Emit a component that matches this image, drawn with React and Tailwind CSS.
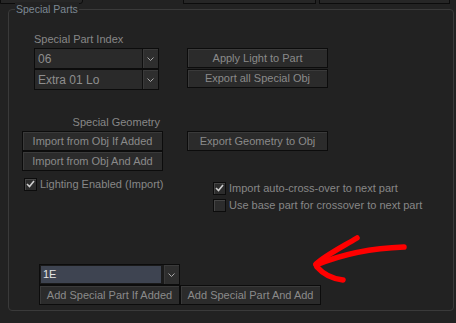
import React from 'react';

const font = { fontFamily: '"Liberation Sans", Arial, sans-serif' };

function Btn({ children, className = '' }) {
  return (
    <div
      className={`flex items-center justify-center border border-[#0c0c0c] bg-[#2b2b2b] text-[11px] text-[#8a8a8a] shadow-[inset_1px_1px_0_#3a3a3a] whitespace-nowrap ${className}`}
    >
      {children}
    </div>
  );
}

function Chevron() {
  return (
    <svg width="7" height="4" viewBox="0 0 7 4" className="block">
      <path d="M0.5 0.5 L3.5 3.5 L6.5 0.5" fill="none" stroke="#a8a8a8" strokeWidth="1" />
    </svg>
  );
}

function Select({ value, className = '' }) {
  return (
    <div className={`flex h-[21px] border border-[#0c0c0c] bg-[#0f0f0f] ${className}`}>
      <div className="flex flex-1 items-center bg-[#2a2a2a] pl-[3px] text-[12px] text-[#8e8e8e]">{value}</div>
      <div className="ml-[1px] flex w-[15px] items-center justify-center bg-[#2e2e2e] shadow-[inset_1px_1px_0_#3a3a3a]">
        <Chevron />
      </div>
    </div>
  );
}

function Check({ checked, label }) {
  return (
    <div className="flex items-center gap-[3px] text-[11px] text-[#878787]">
      <div className="flex h-[13px] w-[13px] items-center justify-center border border-[#0c0c0c] bg-[#2c2c2c] shadow-[inset_1px_1px_0_#454545]">
        {checked && (
          <svg width="9" height="8" viewBox="0 0 9 8">
            <path d="M1 4 L3.5 6.5 L8 1" fill="none" stroke="#cfcfcf" strokeWidth="1.6" />
          </svg>
        )}
      </div>
      <span className="leading-[14px]">{label}</span>
    </div>
  );
}

export default function App() {
  return (
    <div className="relative h-[323px] w-[456px] overflow-hidden bg-[#222222]" style={font}>
      {/* clipped tab buttons at the top */}
      <div className="flex h-[4px]">
        <div className="-mt-[17px] h-[21px] w-[83px] rounded-br-[3px] border border-[#0c0c0c] bg-[#262626]" />
        <div className="-mt-[17px] ml-[100px] h-[21px] w-[133px] border border-[#0c0c0c] bg-[#262626]" />
        <div className="-mt-[17px] ml-[3px] h-[21px] w-[131px] border border-[#0c0c0c] bg-[#262626]" />
      </div>

      {/* group box */}
      <div className="relative ml-[8px] mt-[5px] h-[302px] w-[446px] rounded-[4px] border border-[#3a3a3a]">
        <div className="absolute -top-[8px] left-[6px] bg-[#222222] px-[1px] text-[10.5px] leading-[14px] text-[#7d8893]">
          Special Parts
        </div>

        {/* index row */}
        <div className="mt-[22px] flex">
          <div className="ml-[25px] w-[125px]">
            <div className="h-[16px] text-[11px] leading-[14px] text-[#878787]">Special Part Index</div>
            <Select value="06" />
            <Select value="Extra 01 Lo" />
          </div>
          <div className="ml-[28px] mt-[16px] w-[141px]">
            <Btn className="h-[20px]">Apply Light to Part</Btn>
            <Btn className="mt-[1px] h-[19px]">Export all Special Obj</Btn>
          </div>
        </div>

        {/* geometry */}
        <div className="mt-[25px] h-[16px] w-[151px] text-right text-[11px] leading-[14px] text-[#878787]">
          Special Geometry
        </div>
        <div className="flex">
          <div className="ml-[13px] w-[141px]">
            <Btn className="h-[20px]">Import from Obj If Added</Btn>
            <Btn className="h-[20px]">Import from Obj And Add</Btn>
          </div>
          <div className="ml-[24px] w-[141px]">
            <Btn className="h-[20px]">Export Geometry to Obj</Btn>
          </div>
        </div>

        {/* checkboxes */}
        <div className="mt-[6px] flex">
          <div className="ml-[15px] w-[189px]">
            <Check checked label="Lighting Enabled (Import)" />
          </div>
          <div className="mt-[4px] flex flex-col gap-[3px]">
            <Check checked label="Import auto-cross-over to next part" />
            <Check label="Use base part for crossover to next part" />
          </div>
        </div>

        {/* add part */}
        <div className="ml-[30px] mt-[52px] w-[282px]">
          <div className="flex h-[21px] w-[141px] border border-[#0c0c0c] bg-[#1a1a1a]">
            <div className="m-[1px] flex w-[120px] items-center bg-[#3e4451] pl-[2px] text-[11px] text-[#e4e4e4]">1E</div>
            <div className="ml-[2px] flex w-[15px] items-center justify-center bg-[#2e2e2e] shadow-[inset_1px_1px_0_#3a3a3a]">
              <Chevron />
            </div>
          </div>
          <div className="flex">
            <Btn className="h-[20px] w-[141px]">Add Special Part If Added</Btn>
            <Btn className="h-[20px] w-[141px]">Add Special Part And Add</Btn>
          </div>
        </div>
      </div>

      {/* red annotation arrow */}
      <svg className="pointer-events-none absolute left-0 top-0" width="456" height="323" viewBox="0 0 456 323">
        <g fill="none" stroke="#ff0000" strokeWidth="5.5" strokeLinecap="round" strokeLinejoin="round">
          <path d="M357 238 C 342 247, 326 255, 316 264" />
          <path d="M316 265 C 345 253, 375 248, 404 247" />
          <path d="M317 267 C 324 275, 334 279, 343 280" />
        </g>
      </svg>
    </div>
  );
}
